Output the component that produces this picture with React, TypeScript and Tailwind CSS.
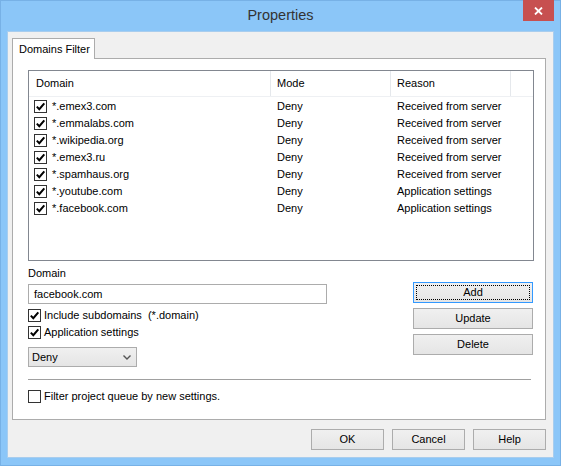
import React from "react"

// rows of the domains list
const domains = [
    { domain: "*.emex3.com", mode: "Deny", reason: "Received from server" },
    { domain: "*.emmalabs.com", mode: "Deny", reason: "Received from server" },
    { domain: "*.wikipedia.org", mode: "Deny", reason: "Received from server" },
    { domain: "*.emex3.ru", mode: "Deny", reason: "Received from server" },
    { domain: "*.spamhaus.org", mode: "Deny", reason: "Received from server" },
    { domain: "*.youtube.com", mode: "Deny", reason: "Application settings" },
    { domain: "*.facebook.com", mode: "Deny", reason: "Application settings" },
]

const CheckBox = ({ checked }: { checked: boolean }) => {
    return (
        <span className="w-[13px] h-[13px] border border-[#333333] bg-white flex items-center justify-center shrink-0">
            {checked && (
                <svg width="11" height="11" viewBox="0 0 11 11">
                    <path d="M1.8 5.6 L4.3 8.2 L9.3 2.4" stroke="#000" strokeWidth="2" fill="none" />
                </svg>
            )}
        </span>
    )
}

const Button = ({ label, focused, className }: { label: string, focused?: boolean, className?: string }) => {
    return (
        <div className={"h-[21px] border bg-linear-to-b from-[#f0f0f0] to-[#e5e5e5] flex items-center justify-center p-[2px] " + (focused ? "border-[#3399ff] " : "border-[#acacac] ") + (className || "")}>
            <div className={"w-full h-full flex items-center justify-center " + (focused ? "border border-dotted border-black" : "")}>
                {label}
            </div>
        </div>
    )
}

const App = () => {
    return (
        <div className="w-[561px] h-[466px] bg-[#8bc6f8] border border-[#77b1e6] flex flex-col font-['Liberation_Sans',Arial,sans-serif] text-[11px] text-black leading-none">
            {/* title bar */}
            <div className="grid grid-cols-[1fr_auto_1fr] h-[30px] shrink-0">
                <div></div>
                <div className="flex items-center text-[14.5px] text-[#333333] pb-[1px]">Properties</div>
                <div className="flex justify-end">
                    <div className="w-[31px] h-[21px] -mt-px mr-[6px] bg-[#c75050] flex items-center justify-center">
                        <svg width="9" height="8" viewBox="0 0 9 8">
                            <path d="M1 0.5 L8 7.5 M8 0.5 L1 7.5" stroke="#fff" strokeWidth="1.8" />
                        </svg>
                    </div>
                </div>
            </div>

            {/* client area */}
            <div className="flex-1 mx-[6px] mb-[7px] bg-[#f0f0f0] border border-[#a8cdee] flex flex-col pl-[4px] pr-[6px] pt-[6px]">
                {/* tab */}
                <div className="flex">
                    <div className="h-[21px] w-[83px] -mb-px relative bg-white border border-b-0 border-[#acacac] flex items-center pl-[6px]">
                        Domains Filter
                    </div>
                </div>
                <div className="h-[362px] mr-px border border-[#acacac] bg-white pl-[15px] pr-[11px] pt-[11px] flex flex-col">
                    {/* list */}
                    <div className="h-[191px] border border-[#828790] flex flex-col">
                        <div className="flex h-[26px] border-b border-[#eef0f3] shrink-0">
                            <div className="w-[242px] border-r border-[#e5e8ec] flex items-center pl-[7px]">Domain</div>
                            <div className="w-[120px] border-r border-[#e5e8ec] flex items-center pl-[6px]">Mode</div>
                            <div className="w-[120px] border-r border-[#e5e8ec] flex items-center pl-[6px]">Reason</div>
                            <div className="flex-1"></div>
                        </div>
                        <div className="flex flex-col pt-[1px]">
                            {domains.map((row) => (
                                <div key={row.domain} className="flex h-[17px] items-center">
                                    <div className="w-[242px] flex items-center pl-[5px] gap-[5px]">
                                        <CheckBox checked={true} />
                                        <span>{row.domain}</span>
                                    </div>
                                    <div className="w-[120px] pl-[6px]">{row.mode}</div>
                                    <div className="w-[120px] pl-[6px]">{row.reason}</div>
                                </div>
                            ))}
                        </div>
                    </div>

                    {/* edit area */}
                    <div className="flex">
                        <div className="flex-1 flex flex-col">
                            <div className="h-[14px] mt-[5px] flex items-center">Domain</div>
                            <div className="w-[299px] h-[20px] mt-[4px] border border-[#acacac] flex items-center pl-[5px]">facebook.com</div>
                            <div className="h-[17px] mt-[3px] flex items-center gap-[3px]">
                                <CheckBox checked={true} />
                                <span className="whitespace-pre">Include subdomains  (*.domain)</span>
                            </div>
                            <div className="h-[17px] flex items-center gap-[3px]">
                                <CheckBox checked={true} />
                                <span>Application settings</span>
                            </div>
                            <div className="w-[109px] h-[20px] mt-[6px] border border-[#acacac] bg-linear-to-b from-[#f0f0f0] to-[#e5e5e5] flex items-center justify-between pl-[3px] pr-[5px]">
                                <span>Deny</span>
                                <svg width="8" height="5" viewBox="0 0 8 5">
                                    <path d="M0.5 0.5 L4 4 L7.5 0.5" stroke="#555" strokeWidth="1.4" fill="none" />
                                </svg>
                            </div>
                        </div>
                        <div className="w-[120px] mr-px pt-[21px] flex flex-col gap-[5px]">
                            <Button label="Add" focused={true} />
                            <Button label="Update" />
                            <Button label="Delete" />
                        </div>
                    </div>

                    <div className="h-px bg-[#a0a0a0] mt-[12px] mr-[3px]"></div>

                    <div className="h-[17px] mt-[8px] flex items-center gap-[3px]">
                        <CheckBox checked={false} />
                        <span>Filter project queue by new settings.</span>
                    </div>
                </div>

                {/* dialog buttons */}
                <div className="flex justify-end gap-[8px] mt-[9px] mr-px">
                    <Button label="OK" className="w-[73px]" />
                    <Button label="Cancel" className="w-[73px]" />
                    <Button label="Help" className="w-[73px]" />
                </div>
            </div>
        </div>
    )
}

export default App
